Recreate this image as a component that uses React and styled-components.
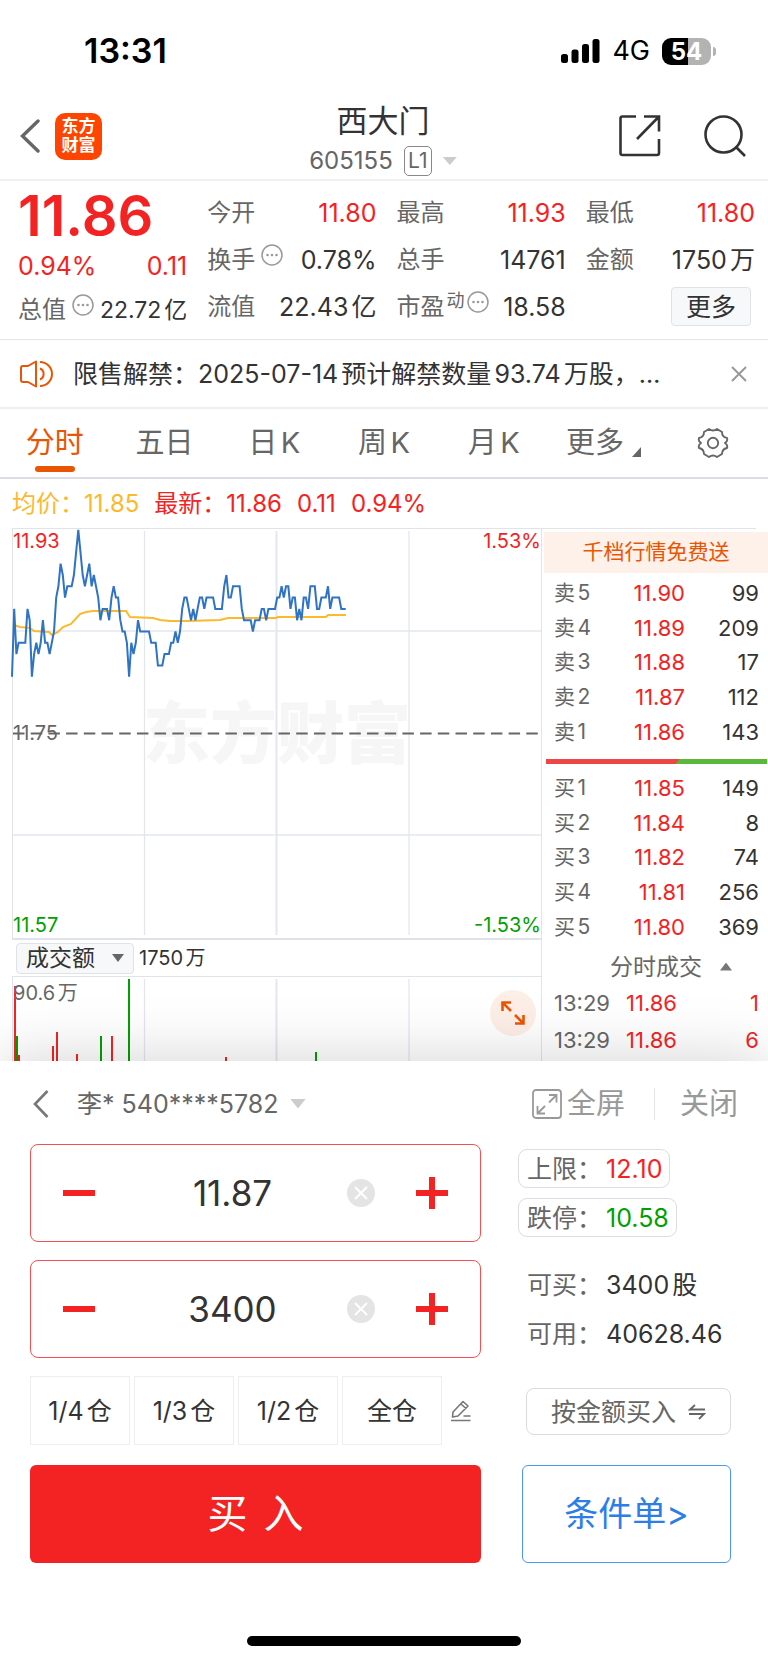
import React, { useState } from "react";
import styled, { createGlobalStyle } from "styled-components";

const RED = "#f42323";
const GREEN = "#00a000";
const ORANGE = "#ea5504";

const GlobalStyle = createGlobalStyle`
  * {
    box-sizing: border-box;
  }
  body {
    margin: 0;
    background: #fff;
    color: #333;
    font-family: Inter, "Noto Sans CJK SC", sans-serif;
    line-height: 32px;
    text-autospace: normal;
  }
  button,
  input,
  select {
    margin: 0;
    padding: 0;
    border: none;
    background: none;
    color: inherit;
    font: inherit;
    text-autospace: inherit;
  }
  button {
    cursor: pointer;
  }
`;

const quoteColumns = [
  [
    { label: "今开", value: "11.80", red: true },
    { label: "换手", value: "0.78%", info: true },
    { label: "流值", value: "22.43亿" },
  ],
  [
    { label: "最高", value: "11.93", red: true },
    { label: "总手", value: "14761" },
    { label: "市盈", sup: "动", value: "18.58", info: true },
  ],
  [
    { label: "最低", value: "11.80", red: true },
    { label: "金额", value: "1750万" },
  ],
];

const tabs = ["分时", "五日", "日K", "周K", "月K"];

const sells = [
  ["卖5", "11.90", 99],
  ["卖4", "11.89", 209],
  ["卖3", "11.88", 17],
  ["卖2", "11.87", 112],
  ["卖1", "11.86", 143],
];

const buys = [
  ["买1", "11.85", 149],
  ["买2", "11.84", 8],
  ["买3", "11.82", 74],
  ["买4", "11.81", 256],
  ["买5", "11.80", 369],
];

const deals = [
  ["13:29", "11.86", 1],
  ["13:29", "11.86", 6],
];

// one value per minute, in cents above 11.80
const ticks = [
  0, 6, 2, 3, 3, 3, 3, 6, 5, 0, 2, 3, 2, 3, 5, 3, 3, 2, 3, 4, 7, 8, 10, 9, 7, 8,
  8, 8, 9, 11, 13, 11, 9, 8, 9, 10, 8, 9, 8, 7, 5, 6, 6, 6, 5, 7, 8, 7, 7, 5, 4,
  4, 3, 0, 3, 2, 3, 5, 4, 4, 4, 4, 4, 3, 3, 3, 1, 1, 1, 2, 2, 2, 3, 3, 4, 3, 4,
  6, 7, 7, 6, 5, 6, 5, 6, 7, 7, 6, 7, 7, 7, 7, 6, 6, 6, 6, 8, 9, 7, 7, 8, 8, 8,
  8, 6, 5, 5, 5, 5, 4, 5, 5, 5, 6, 6, 5, 6, 6, 6, 6, 7, 7, 8, 7, 8, 8, 6, 7, 7,
  5, 6, 5, 7, 7, 6, 8, 8, 8, 6, 6, 7, 7, 7, 8, 6, 7, 7, 7, 7, 6, 6, 6,
];

const pricePoints = ticks
  .map((t, i) => `${(i * 2.21).toFixed(1)},${(147.7 - t * 11.3).toFixed(1)}`)
  .join(" ");

const averagePoints =
  "2,96 8,98 18,99 22,102 37,103 40,106 46,103 51,98 59,95 68,85 74,83 81,82 114,82 118,88 141,89 148,91 158,92 175,92 208,91 216,89 264,89 266,88 314,88 316,86 334,86";

const volumes = [
  { x: 3, y: 9, color: RED },
  { x: 5, y: 59, color: GREEN },
  { x: 7, y: 78, color: RED },
  { x: 41, y: 69, color: RED },
  { x: 45, y: 55, color: RED },
  { x: 65, y: 77, color: RED },
  { x: 89, y: 59, color: GREEN },
  { x: 100, y: 59, color: RED },
  { x: 117, y: 2, color: GREEN },
  { x: 214, y: 80, color: RED },
  { x: 304, y: 75, color: GREEN },
];

function InfoIcon() {
  return (
    <svg width="22" height="22" viewBox="0 0 22 22">
      <circle cx="11" cy="11" r="10" fill="none" stroke="#999" strokeWidth="1.5" />
      <circle cx="6.5" cy="11" r="1.3" fill="#999" />
      <circle cx="11" cy="11" r="1.3" fill="#999" />
      <circle cx="15.5" cy="11" r="1.3" fill="#999" />
    </svg>
  );
}

function StatusBar() {
  return (
    <Status>
      <Clock>13:31</Clock>
      <StatusRight>
        <svg width="39" height="25" viewBox="0 0 39 25">
          <rect x="0" y="15" width="7" height="9" rx="2.5" />
          <rect x="10.5" y="10.5" width="7" height="13.5" rx="2.5" />
          <rect x="21" y="5" width="7" height="19" rx="2.5" />
          <rect x="31.5" y="0" width="7" height="24" rx="2.5" />
        </svg>
        <Network>4G</Network>
        <Battery>
          <BatteryBody>54</BatteryBody>
          <BatteryNub />
        </Battery>
      </StatusRight>
    </Status>
  );
}

function Header() {
  return (
    <HeaderBar>
      <HeaderSide>
        <IconButton aria-label="返回">
          <svg width="20" height="34" viewBox="0 0 20 34">
            <path d="M18 2 L2.5 17 L18 32" fill="none" stroke="#666" strokeWidth="3.4" strokeLinecap="round" />
          </svg>
        </IconButton>
        <Logo>
          <span>东方</span>
          <span>财富</span>
        </Logo>
      </HeaderSide>
      <div>
        <Title>西大门</Title>
        <CodeButton>
          605155
          <Level>L1</Level>
          <Caret $color="#ccc" $size={14} />
        </CodeButton>
      </div>
      <HeaderSide $end>
        <IconButton aria-label="分享">
          <svg width="42" height="42" viewBox="0 0 42 42" fill="none" stroke="#333" strokeWidth="2.6">
            <path d="M17 1.5 H3.5 Q1.5 1.5 1.5 3.5 V38 Q1.5 40 3.5 40 H38 Q40 40 40 38 V24" />
            <path d="M25 1.5 H40 V16.5 M40 1.5 L18 24" />
          </svg>
        </IconButton>
        <IconButton aria-label="搜索">
          <svg width="42" height="42" viewBox="0 0 42 42" fill="none" stroke="#333" strokeWidth="2.6">
            <circle cx="19.5" cy="19.5" r="18" />
            <path d="M31.5 31.5 L41 41" />
          </svg>
        </IconButton>
      </HeaderSide>
    </HeaderBar>
  );
}

function Quote() {
  return (
    <QuoteGrid>
      <div>
        <BigPrice>11.86</BigPrice>
        <ChangeRow>
          <span>0.94%</span>
          <span>0.11</span>
        </ChangeRow>
        <CapRow>
          <QuoteLabel>
            总值
            <InfoIcon />
          </QuoteLabel>
          <CapValue>22.72亿</CapValue>
        </CapRow>
      </div>
      {quoteColumns.map((column, i) => (
        <div key={i}>
          {column.map((item) => (
            <QuoteRow key={item.label}>
              <QuoteLabel>
                {item.label}
                {item.sup && <Sup>{item.sup}</Sup>}
                {item.info && <InfoIcon />}
              </QuoteLabel>
              <QuoteValue $red={item.red}>{item.value}</QuoteValue>
            </QuoteRow>
          ))}
          {i === 2 && (
            <QuoteRow $end>
              <MoreButton>更多</MoreButton>
            </QuoteRow>
          )}
        </div>
      ))}
    </QuoteGrid>
  );
}

function Notice() {
  return (
    <NoticeBar>
      <svg width="34" height="28" viewBox="0 0 34 28" fill="none" stroke={ORANGE} strokeWidth="2">
        <path d="M16 1.5 L8 6 H3 Q1 6 1 8 V20 Q1 22 3 22 H8 L16 26.5 Z" strokeLinejoin="round" />
        <path d="M20 8.5 A6 6 0 0 1 20 19.5" />
        <path d="M20 2 A12 12 0 0 1 20 26" />
      </svg>
      <NoticeText>限售解禁：2025-07-14预计解禁数量93.74万股，…</NoticeText>
      <IconButton aria-label="关闭公告">
        <svg width="16" height="16" viewBox="0 0 16 16">
          <path d="M1 1 L15 15 M15 1 L1 15" stroke="#999" strokeWidth="2" />
        </svg>
      </IconButton>
    </NoticeBar>
  );
}

function ChartTabs() {
  const [active, setActive] = useState("分时");
  return (
    <TabBar>
      {tabs.map((tab) => (
        <Tab key={tab} $active={tab === active} onClick={() => setActive(tab)}>
          {tab}
        </Tab>
      ))}
      <Tab>
        更多
        <Corner width="9" height="10" viewBox="0 0 9 10">
          <path d="M9 0 V10 H0 Z" fill="#666" />
        </Corner>
      </Tab>
      <Tab aria-label="设置">
        <svg width="32" height="32" viewBox="0 0 32 32" fill="none" stroke="#666" strokeWidth="1.9">
          <path
            d="M12 2 Q16 5 20 2 L25 5 Q25 10 30 11 Q31 14 28 16 Q31 18 30 21 Q25 22 25 27 L20 30 Q16 27 12 30 L7 27 Q7 22 2 21 Q1 18 4 16 Q1 14 2 11 Q7 10 7 5 Z"
            strokeLinejoin="round"
          />
          <circle cx="16" cy="16" r="5.2" />
        </svg>
      </Tab>
    </TabBar>
  );
}

function PriceChart() {
  return (
    <PriceArea>
      <Watermark>东方财富</Watermark>
      <ChartSvg viewBox="1 0 528 409" preserveAspectRatio="none">
        <g stroke="#e3e7ed">
          <path d="M132.5 2 V406 M397 2 V406" strokeWidth="1.3" />
          <path d="M264.5 2 V406" strokeWidth="2" />
          <path d="M1 102 H529 M1 306 H529" strokeWidth="1.6" />
        </g>
        <path d="M1 204.5 H529" stroke="#666" strokeWidth="2" strokeDasharray="11.5 6.2" />
        <polyline points={averagePoints} fill="none" stroke="#fdb92e" strokeWidth="2" />
        <polyline points={pricePoints} fill="none" stroke="#2e73c4" strokeWidth="2" />
      </ChartSvg>
      <AxisLabel $color={RED} $top>11.93</AxisLabel>
      <AxisLabel $color={RED} $top $right>1.53%</AxisLabel>
      <AxisLabel $color="#666" $middle>11.75</AxisLabel>
      <AxisLabel $color={GREEN}>11.57</AxisLabel>
      <AxisLabel $color={GREEN} $right>-1.53%</AxisLabel>
    </PriceArea>
  );
}

function VolumeChart() {
  return (
    <VolumeArea>
      <ChartSvg viewBox="1 0 528 84" preserveAspectRatio="none">
        <g stroke="#e3e7ed">
          <path d="M132.5 2 V84 M397 2 V84" strokeWidth="1.3" />
          <path d="M264.5 2 V84" strokeWidth="2" />
        </g>
        {volumes.map((bar) => (
          <path key={bar.x} d={`M${bar.x} ${bar.y} V84`} stroke={bar.color} strokeWidth="2" />
        ))}
      </ChartSvg>
      <MaxVolume>90.6万</MaxVolume>
      <ExpandButton aria-label="放大">
        <svg width="24" height="24" viewBox="0 0 24 24" fill="none" stroke={ORANGE} strokeWidth="2.6">
          <path d="M1.5 10 V1.5 H10 M1.5 1.5 L10 10" />
          <path d="M22.5 14 V22.5 H14 M22.5 22.5 L14 14" />
        </svg>
      </ExpandButton>
    </VolumeArea>
  );
}

function Book({ label, rows }) {
  return (
    <BookTable aria-label={label}>
      <tbody>
        {rows.map(([name, price, amount]) => (
          <tr key={name}>
            <th scope="row">{name}</th>
            <td>{price}</td>
            <td>{amount}</td>
          </tr>
        ))}
      </tbody>
    </BookTable>
  );
}

function OrderPanel() {
  return (
    <Orders>
      <Banner href="#level2">千档行情免费送</Banner>
      <Book label="卖盘" rows={sells} />
      <Ratio>
        <svg width="100%" height="5" viewBox="0 0 220 5" preserveAspectRatio="none">
          <rect width="220" height="5" fill="#5ab83c" />
          <path d="M0 0 H133 L129 5 H0 Z" fill="#ee4545" />
        </svg>
      </Ratio>
      <Book label="买盘" rows={buys} />
      <DealButton>
        分时成交
        <Caret $color="#777" $up />
      </DealButton>
      <DealTable aria-label="分时成交">
        <tbody>
          {deals.map(([time, price, amount], i) => (
            <tr key={i}>
              <th scope="row">{time}</th>
              <td>{price}</td>
              <td>{amount}</td>
            </tr>
          ))}
        </tbody>
      </DealTable>
    </Orders>
  );
}

function Stepper({ label, start, step, digits }) {
  const [value, setValue] = useState(start);
  const change = (delta) =>
    setValue((v) => Math.max(0, Number(v) + delta).toFixed(digits));
  return (
    <StepperBox>
      <StepButton aria-label={`减少${label}`} onClick={() => change(-step)}>
        <svg width="32" height="32" viewBox="0 0 32 32">
          <path d="M0 16 H32" stroke={RED} strokeWidth="6" />
        </svg>
      </StepButton>
      <StepInput
        aria-label={label}
        value={value}
        onChange={(e) => setValue(e.target.value)}
      />
      <ClearButton aria-label={`清空${label}`} onClick={() => setValue("")}>
        <svg width="28" height="28" viewBox="0 0 28 28">
          <circle cx="14" cy="14" r="14" fill="#e4e4e4" />
          <path d="M8 8 L20 20 M20 8 L8 20" stroke="#fff" strokeWidth="2" />
        </svg>
      </ClearButton>
      <StepButton aria-label={`增加${label}`} onClick={() => change(step)}>
        <svg width="32" height="32" viewBox="0 0 32 32">
          <path d="M0 16 H32 M16 0 V32" stroke={RED} strokeWidth="6" />
        </svg>
      </StepButton>
    </StepperBox>
  );
}

function TradeSheet() {
  return (
    <Sheet>
      <SheetHeader>
        <IconButton aria-label="返回">
          <svg width="16" height="28" viewBox="0 0 16 28">
            <path d="M14.5 1 L2 14 L14.5 27" fill="none" stroke="#777" strokeWidth="2.6" />
          </svg>
        </IconButton>
        <AccountSelect aria-label="资金账号">
          <option>李* 540****5782</option>
        </AccountSelect>
        <Caret $color="#ccc" $size={16} />
        <SheetActions>
          <ActionButton>
            <svg width="30" height="30" viewBox="0 0 30 30" fill="none" stroke="#999" strokeWidth="1.8">
              <rect x="1" y="1" width="28" height="28" rx="3" />
              <path d="M17 6 H24.5 V13.5 M24.5 6 L17 13.5" />
              <path d="M5.5 17 V24.5 H13 M5.5 24.5 L13 17" />
            </svg>
            全屏
          </ActionButton>
          <Divider />
          <ActionButton>关闭</ActionButton>
        </SheetActions>
      </SheetHeader>
      <SheetBody>
        <Left>
          <Stepper label="价格" start="11.87" step={0.01} digits={2} />
          <Stepper label="数量" start="3400" step={100} digits={0} />
          <Positions>
            {["1/4仓", "1/3仓", "1/2仓", "全仓"].map((name) => (
              <PositionButton key={name}>{name}</PositionButton>
            ))}
            <EditButton aria-label="编辑仓位">
              <svg width="22" height="22" viewBox="0 0 22 22" fill="none" stroke="#777" strokeWidth="1.6">
                <path d="M3 12 L13 1.5 L18 6 L8 16 L2.5 17 Z M11 4 L16 8.5" strokeLinejoin="round" />
                <path d="M13.5 16 H20.5 M1 20.5 H20.5" />
              </svg>
            </EditButton>
          </Positions>
          <BuyButton>
            <span>买</span>
            <span>入</span>
          </BuyButton>
        </Left>
        <Right>
          <LimitButton>
            <span>上限：</span>
            <Limit $color={RED}>12.10</Limit>
          </LimitButton>
          <LimitButton>
            <span>跌停：</span>
            <Limit $color={GREEN}>10.58</Limit>
          </LimitButton>
          <Funds>
            <FundRow>
              <dt>可买：</dt>
              <dd>3400股</dd>
            </FundRow>
            <FundRow>
              <dt>可用：</dt>
              <dd>40628.46</dd>
            </FundRow>
          </Funds>
          <AmountButton>
            按金额买入
            <svg width="18" height="16" viewBox="0 0 18 16" fill="none" stroke="#666" strokeWidth="1.8">
              <path d="M17 5.5 H2 L7 1 M1 10 H16 L11 15" />
            </svg>
          </AmountButton>
          <ConditionButton>条件单&gt;</ConditionButton>
        </Right>
      </SheetBody>
      <HomeIndicator />
    </Sheet>
  );
}

function App() {
  return (
    <Page>
      <GlobalStyle />
      <StatusBar />
      <Header />
      <Quote />
      <Notice />
      <ChartTabs />
      <Legend>
        <Avg>均价：11.85</Avg>
        <span>最新：11.86</span>
        <span>0.11</span>
        <span>0.94%</span>
      </Legend>
      <Market>
        <Charts>
          <PriceChart />
          <VolumeBar>
            <SelectWrap>
              <IndicatorSelect aria-label="指标">
                <option>成交额</option>
              </IndicatorSelect>
              <Caret $color="#666" />
            </SelectWrap>
            <span>1750万</span>
          </VolumeBar>
          <VolumeChart />
        </Charts>
        <OrderPanel />
      </Market>
      <TradeSheet />
    </Page>
  );
}

export default App;

const Page = styled.div`
  min-height: 100vh;
  overflow: hidden;
`;

const IconButton = styled.button`
  display: flex;
  align-items: center;
  justify-content: center;
  flex-shrink: 0;
`;

const Caret = styled.i`
  flex-shrink: 0;
  width: ${(p) => p.$size || 12}px;
  height: ${(p) => (p.$size === 16 ? 10 : 8)}px;
  background: ${(p) => p.$color};
  clip-path: ${(p) =>
    p.$up ? "polygon(0 100%, 50% 0, 100% 100%)" : "polygon(0 0, 100% 0, 50% 100%)"};
  pointer-events: none;
`;

const Status = styled.div`
  display: flex;
  align-items: center;
  justify-content: space-between;
  height: 100px;
  padding: 2px 52px 0 84px;
  color: #000;
`;

const Clock = styled.span`
  font-size: 34px;
  font-weight: 600;
`;

const StatusRight = styled.div`
  display: flex;
  align-items: center;
`;

const Network = styled.span`
  margin: 0 12px;
  font-size: 27px;
`;

const Battery = styled.div`
  display: flex;
  align-items: center;
  gap: 2px;
`;

const BatteryBody = styled.span`
  width: 49px;
  border-radius: 9px;
  background: linear-gradient(90deg, #000 54%, #b3b3b3 54%);
  color: #fff;
  font-size: 24px;
  font-weight: 700;
  line-height: 27px;
  text-align: center;
`;

const BatteryNub = styled.i`
  width: 3px;
  height: 9px;
  border-radius: 0 3px 3px 0;
  background: #b3b3b3;
`;

const HeaderBar = styled.header`
  display: grid;
  grid-template-columns: 1fr auto 1fr;
  height: 81px;
  padding: 0 22px 0 20px;
  border-bottom: 2px solid #f0f0f0;
  text-align: center;
`;

const HeaderSide = styled.div`
  display: flex;
  align-items: center;
  justify-content: ${(p) => (p.$end ? "flex-end" : "flex-start")};
  gap: ${(p) => (p.$end ? 43 : 15)}px;
  padding-bottom: 8px;
`;

const Logo = styled.div`
  display: flex;
  flex-direction: column;
  justify-content: center;
  width: 47px;
  height: 47px;
  border-radius: 10px;
  background: #ff4400;
  color: #fff;
  font-size: 17px;
  font-weight: 700;
  line-height: 19px;
`;

const Title = styled.h1`
  margin: 0;
  font-size: 31px;
  font-weight: 400;
  line-height: 42px;
`;

const CodeButton = styled.button`
  display: flex;
  align-items: center;
  gap: 11px;
  height: 38px;
  color: #666;
  font-size: 24px;
`;

const Level = styled.span`
  width: 28px;
  border: 1px solid #888;
  border-radius: 5px;
  font-size: 21px;
  line-height: 28px;
`;

const QuoteGrid = styled.section`
  display: grid;
  grid-template-columns: repeat(4, 1fr);
  gap: 20px;
  padding: 8px 13px 9px 18px;
  border-bottom: 1px solid #e6e6e6;
  font-size: 25px;
`;

const BigPrice = styled.div`
  color: ${RED};
  font-size: 56px;
  font-weight: 600;
  line-height: 54px;
`;

const ChangeRow = styled.div`
  display: flex;
  align-items: center;
  justify-content: space-between;
  height: 46px;
  color: ${RED};
`;

const CapRow = styled.div`
  display: flex;
  align-items: center;
  justify-content: space-between;
  height: 41px;
`;

const CapValue = styled.span`
  font-size: 23px;
`;

const QuoteRow = styled.div`
  display: flex;
  align-items: center;
  justify-content: ${(p) => (p.$end ? "flex-end" : "space-between")};
  height: 47px;
`;

const QuoteLabel = styled.span`
  display: flex;
  align-items: center;
  color: #666;
  font-size: 24px;
  white-space: nowrap;

  svg {
    margin: 0 0 10px 6px;
  }
`;

const Sup = styled.sup`
  margin: 0 -4px 12px 2px;
  font-size: 18px;
  line-height: 20px;
`;

const QuoteValue = styled.span`
  color: ${(p) => (p.$red ? RED : "#333")};
  white-space: nowrap;
`;

const MoreButton = styled.button`
  width: 80px;
  height: 39px;
  margin-right: 4px;
  border: 1px solid #dfe2e7;
  border-radius: 4px;
  background: #f7f8fa;
`;

const NoticeBar = styled.section`
  display: flex;
  align-items: center;
  height: 69px;
  padding: 0 21px 0 20px;
  border-bottom: 2px solid #eee;
`;

const NoticeText = styled.p`
  flex: 1;
  min-width: 0;
  margin: 0 19px;
  overflow: hidden;
  font-size: 25px;
  white-space: nowrap;
`;

const TabBar = styled.nav`
  display: grid;
  grid-template-columns: repeat(7, 1fr);
  height: 70px;
  border-bottom: 2px solid #dcdce4;
`;

const Tab = styled.button`
  position: relative;
  display: flex;
  align-items: center;
  justify-content: center;
  color: ${(p) => (p.$active ? ORANGE : "#666")};
  font-size: 29px;

  &::after {
    content: "";
    position: absolute;
    bottom: 5px;
    width: 40px;
    height: 6px;
    border-radius: 3px;
    background: ${(p) => (p.$active ? ORANGE : "transparent")};
  }
`;

const Corner = styled.svg`
  margin: 18px 0 0 8px;
`;

const Legend = styled.div`
  display: flex;
  align-items: center;
  gap: 15px;
  height: 50px;
  margin: 0 12px;
  border-bottom: 1px solid #e0e3e8;
  color: ${RED};
  font-size: 24px;
`;

const Avg = styled.span`
  color: #fdb92e;
`;

const Market = styled.main`
  display: grid;
  grid-template-columns: minmax(0, 1fr) 226px;
`;

const Charts = styled.section`
  margin-left: 12px;
  border-right: 1px solid #e0e3e8;
`;

const PriceArea = styled.div`
  position: relative;
  height: 411px;
  border-left: 1px solid #e0e3e8;
  border-bottom: 2px solid #dfe3e9;
`;

const ChartSvg = styled.svg`
  position: relative;
  display: block;
  width: 100%;
  height: 100%;
  overflow: visible;
`;

const Watermark = styled.div`
  position: absolute;
  inset: 0;
  display: flex;
  align-items: center;
  justify-content: center;
  color: #f6f6f6;
  font-size: 67px;
  font-weight: 900;
`;

const AxisLabel = styled.span`
  position: absolute;
  ${(p) => (p.$right ? "right: 0" : "left: 0")};
  ${(p) => (p.$middle ? "top: 192px" : p.$top ? "top: 0" : "bottom: 1px")};
  color: ${(p) => p.$color};
  font-size: 20px;
  line-height: 24px;
`;

const VolumeBar = styled.div`
  display: flex;
  align-items: center;
  gap: 5px;
  height: 37px;
  padding: 0 4px;
  border-bottom: 1px solid #e0e3e8;
  font-size: 20px;
`;

const SelectWrap = styled.label`
  display: flex;
  align-items: center;
  justify-content: space-between;
  width: 118px;
  height: 31px;
  padding: 0 9px;
  border: 1px solid #dfe2e7;
  border-radius: 4px;
  background: #f7f8fa;
`;

const IndicatorSelect = styled.select`
  appearance: none;
  outline: none;
  font-size: 23px;
  line-height: 28px;
`;

const VolumeArea = styled.div`
  position: relative;
  height: 84px;
  border-left: 1px solid #e0e3e8;
`;

const MaxVolume = styled.span`
  position: absolute;
  top: 4px;
  left: 0;
  color: #666;
  font-size: 20px;
  line-height: 24px;
`;

const ExpandButton = styled.button`
  position: absolute;
  top: 13px;
  right: 5px;
  display: flex;
  align-items: center;
  justify-content: center;
  width: 46px;
  height: 46px;
  border-radius: 50%;
  background: #fdefe7;
`;

const Orders = styled.aside`
  display: flex;
  flex-direction: column;
  padding-top: 3px;
`;

const Banner = styled.a`
  height: 41px;
  margin: 0 0 3px 2px;
  background: #fdf1ea;
  color: ${ORANGE};
  font-size: 21px;
  line-height: 40px;
  text-align: center;
  text-decoration: none;
`;

const BookTable = styled.table`
  width: 100%;
  height: 173px;
  border-collapse: collapse;
  table-layout: fixed;
  font-size: 22px;
  line-height: 24px;

  th {
    padding: 0 0 0 12px;
    color: #666;
    font-size: 21px;
    font-weight: 400;
    text-align: left;
  }
  td {
    width: 83px;
    padding: 0 9px 0 0;
    text-align: right;
  }
  th + td {
    width: 70px;
    padding: 0;
    color: ${RED};
  }
`;

const DealTable = styled(BookTable)`
  height: 73px;

  th {
    font-size: 22px;
  }
  td {
    color: ${RED};
  }
  th + td {
    width: 59px;
    text-align: left;
  }
`;

const Ratio = styled.div`
  height: 5px;
  margin: 10px 1px 7px 4px;

  svg {
    display: block;
  }
`;

const DealButton = styled.button`
  display: flex;
  align-items: center;
  justify-content: center;
  gap: 18px;
  height: 37px;
  margin: 4px 0 0 32px;
  color: #666;
  font-size: 23px;
`;

const Sheet = styled.section`
  position: relative;
  padding-bottom: 17px;
  background: #fff;
  box-shadow: 0 0 60px rgba(0, 0, 0, 0.18);
`;

const SheetHeader = styled.div`
  display: flex;
  align-items: center;
  height: 83px;
  padding: 2px 30px 0 33px;
`;

const AccountSelect = styled.select`
  appearance: none;
  outline: none;
  margin: 0 11px 0 28px;
  color: #666;
  font-size: 25px;
`;

const SheetActions = styled.div`
  display: flex;
  align-items: center;
  margin-left: auto;
`;

const ActionButton = styled.button`
  display: flex;
  align-items: center;
  gap: 5px;
  color: #999;
  font-size: 29px;
`;

const Divider = styled.i`
  width: 1px;
  height: 32px;
  margin: 0 25px 0 29px;
  background: #e4e4ea;
`;

const SheetBody = styled.div`
  display: grid;
  grid-template-columns: minmax(0, 1fr) 213px;
  gap: 37px;
  padding: 0 37px 0 30px;
`;

const Left = styled.div`
  display: flex;
  flex-direction: column;
`;

const StepperBox = styled.div`
  display: flex;
  height: 98px;
  margin-bottom: 18px;
  border: 1px solid #f45050;
  border-radius: 8px;
`;

const StepButton = styled(IconButton)`
  width: 96px;
`;

const StepInput = styled.input`
  flex: 1;
  min-width: 0;
  outline: none;
  font-size: 35px;
  line-height: 48px;
  text-align: center;
`;

const ClearButton = styled(IconButton)`
  width: 46px;
`;

const Positions = styled.div`
  display: flex;
  gap: 4px;
  height: 69px;
  margin-bottom: 20px;
`;

const PositionButton = styled.button`
  width: 100px;
  border: 1px solid #eee;
  font-size: 25px;
`;

const EditButton = styled(IconButton)`
  width: 30px;
`;

const BuyButton = styled.button`
  display: flex;
  align-items: center;
  justify-content: center;
  gap: 16px;
  height: 98px;
  border-radius: 6px;
  background: ${RED};
  color: #fff;
  font-size: 40px;
`;

const Right = styled.div`
  display: flex;
  flex-direction: column;
  align-items: flex-start;
  padding-top: 5px;
  font-size: 25px;
`;

const LimitButton = styled.button`
  display: flex;
  align-items: center;
  height: 39px;
  margin-bottom: 10px;
  padding: 0 7px 0 8px;
  border: 1px solid #dcdce4;
  border-radius: 9px;
  color: #666;
`;

const Limit = styled.span`
  margin-left: 4px;
  color: ${(p) => p.$color};
`;

const Funds = styled.dl`
  margin: 13px 0 30px 9px;
`;

const FundRow = styled.div`
  display: flex;
  align-items: center;
  height: 49px;

  dt {
    color: #666;
  }
  dd {
    margin: 0 0 0 4px;
  }
`;

const AmountButton = styled.button`
  display: flex;
  align-items: center;
  align-self: flex-end;
  justify-content: center;
  gap: 12px;
  width: 205px;
  height: 47px;
  margin-bottom: 30px;
  border: 1px solid #dcdce0;
  border-radius: 8px;
  color: #666;
`;

const ConditionButton = styled.button`
  align-self: flex-end;
  width: 209px;
  height: 98px;
  border: 1px solid #4a97f0;
  border-radius: 6px;
  color: #2b7de9;
  font-size: 34px;
`;

const HomeIndicator = styled.div`
  width: 274px;
  height: 10px;
  margin: 73px auto 0;
  border-radius: 5px;
  background: #000;
`;
